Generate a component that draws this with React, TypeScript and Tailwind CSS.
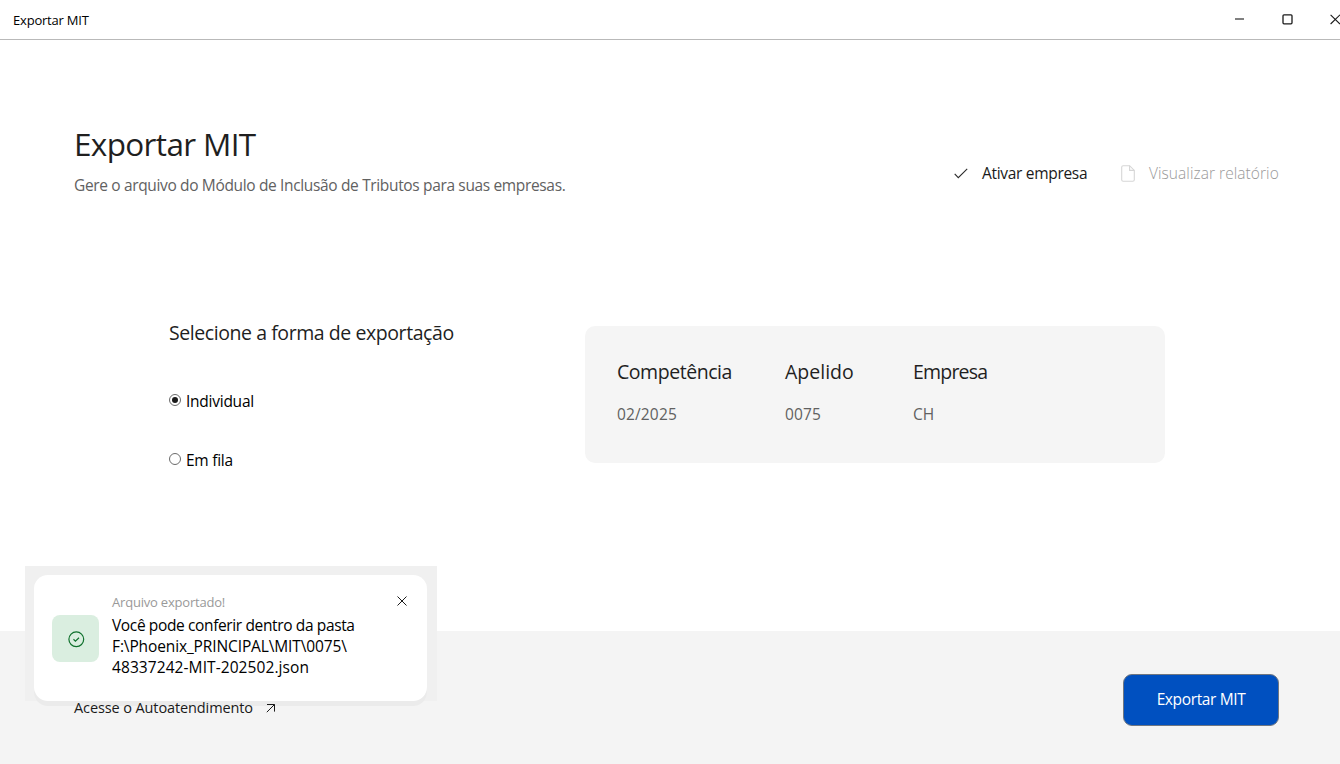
import React, { useState } from 'react';
import { clsx } from 'clsx';

type ExportMode = 'individual' | 'fila';

const company = [
  { label: 'Competência', value: '02/2025', width: 'w-[168px]', labelTracking: 'tracking-[-0.45px]', valueTracking: 'tracking-[0.15px]' },
  { label: 'Apelido', value: '0075', width: 'w-[128px]', labelTracking: 'tracking-normal', valueTracking: 'tracking-[0.1px]' },
  { label: 'Empresa', value: 'CH', width: 'w-[128px]', labelTracking: 'tracking-[-0.8px]', valueTracking: 'tracking-normal' },
];

const toastLines = [
  { text: 'Você pode conferir dentro da pasta', tracking: 'tracking-[-0.37px]' },
  { text: 'F:\\Phoenix_PRINCIPAL\\MIT\\0075\\', tracking: 'tracking-[-0.12px]' },
  { text: '48337242-MIT-202502.json', tracking: 'tracking-[0.08px]' },
];

const TitleBar: React.FC = () => (
  <header className="flex h-10 shrink-0 items-center justify-between border-b border-[#b9b9b9] pl-[13px]">
    <span className="text-[13px] leading-5 tracking-[-0.2px] text-black">Exportar MIT</span>
    <div className="flex shrink-0 items-center gap-[37px] text-[#1a1a1a] -mr-[1px]">
      <button aria-label="Minimizar">
        <svg width="11" height="11" viewBox="0 0 11 11" fill="none" stroke="#606060" strokeWidth="1.6">
          <path d="M1 5H10" />
        </svg>
      </button>
      <button aria-label="Maximizar">
        <svg width="11" height="11" viewBox="0 0 11 11" fill="none" stroke="currentColor" strokeWidth="1.3">
          <rect x="1" y="0.8" width="9" height="9" rx="1" />
        </svg>
      </button>
      <button aria-label="Fechar" className="w-[11px]">
        <svg width="11" height="11" viewBox="0 0 11 11" fill="none" stroke="currentColor" strokeWidth="1.1">
          <path d="M0.6 0.8L10 10M10 0.8L0.6 10" />
        </svg>
      </button>
    </div>
  </header>
);

interface RadioProps {
  label: string;
  checked: boolean;
  onChange: () => void;
}

const Radio: React.FC<RadioProps> = ({ label, checked, onChange }) => (
  <label className="flex items-center gap-[5px]">
    <input type="radio" name="mode" className="sr-only" checked={checked} onChange={onChange} />
    <span className="-mt-[3px] flex h-3 w-3 items-center justify-center rounded-full border border-[#6b6b6b] bg-white">
      {checked && <span className="h-1.5 w-1.5 rounded-full bg-[#1a1a1a]" />}
    </span>
    <span className="text-[15.5px] leading-5 tracking-[-0.25px] text-black">{label}</span>
  </label>
);

const Toast: React.FC<{ onClose: () => void }> = ({ onClose }) => (
  <div className="absolute left-[25px] top-[566px] h-[135px] w-[412px] bg-[#f0f0f0] px-[9px] pt-[9px]">
    <div className="flex h-[126px] w-[393px] rounded-[14px] bg-white pl-[18px] pt-[17px] shadow-[0_5px_0_0_#ebebeb]">
      <div className="mt-[23px] flex h-[47px] w-[47px] shrink-0 items-center justify-center rounded-lg bg-[#daeee0]">
        <svg width="18" height="18" viewBox="0 0 18 18" fill="none" stroke="#0e702c" strokeWidth="1.2">
          <circle cx="9.3" cy="9.3" r="7.4" />
          <path d="M6.5 9.3L8.4 11.1L12 7.8" />
        </svg>
      </div>
      <div className="-mt-px ml-[13px] w-[270px] whitespace-nowrap">
        <p className="mb-[2px] text-[13px] leading-[22px] tracking-[-0.2px] text-[#999]">Arquivo exportado!</p>
        {toastLines.map(line => (
          <p key={line.text} className={clsx('text-[15.5px] leading-[21px] text-black', line.tracking)}>{line.text}</p>
        ))}
      </div>
      <button aria-label="Fechar aviso" onClick={onClose} className="ml-[15px] mt-[4px] h-[11px] w-[11px]">
        <svg width="11" height="11" viewBox="0 0 11 11" fill="none" stroke="#1a1a1a" strokeWidth="1">
          <path d="M0.5 0.5L9.5 9.5M9.5 0.5L0.5 9.5" />
        </svg>
      </button>
    </div>
  </div>
);

export default function App() {
  const [mode, setMode] = useState<ExportMode>('individual');
  const [toastOpen, setToastOpen] = useState(true);

  return (
    <div className="relative flex h-[764px] w-[1340px] flex-col overflow-hidden bg-white font-['Open_Sans','Noto_Sans',sans-serif]">
      <TitleBar />

      <main className="flex flex-1 flex-col whitespace-nowrap">
        <section className="flex justify-between pl-[74px] pr-[61px] pt-[83px]">
          <div>
            <h1 className="text-[31.5px] leading-[42px] tracking-[-0.65px] text-[#1f1f1f]">Exportar MIT</h1>
            <p className="mt-[10px] text-[15.5px] leading-5 tracking-[-0.35px] text-[#616161]">
              Gere o arquivo do Módulo de Inclusão de Tributos para suas empresas.
            </p>
          </div>
          <div className="mt-[40px] flex h-5 items-center">
            <button className="flex items-center">
              <svg width="14" height="11" viewBox="0 0 14 11" fill="none" stroke="#2b2b2b" strokeWidth="1.1">
                <path d="M0.7 5.8L4.3 9.6L13.2 0.9" />
              </svg>
              <span className="ml-[14px] w-[105px] text-left text-[15.5px] leading-5 tracking-[-0.31px] text-[#1a1a1a]">Ativar empresa</span>
            </button>
            <button className="ml-[34px] flex items-center" disabled>
              <svg width="14" height="17" viewBox="0 0 14 17" fill="none" stroke="#d6d6d6" strokeWidth="1.1">
                <path d="M2.2 0.7H8.6L13.3 5.4V14.8Q13.3 16.3 11.8 16.3H2.2Q0.7 16.3 0.7 14.8V2.2Q0.7 0.7 2.2 0.7Z" />
                <path d="M8.6 0.7V5.4H13.3" />
              </svg>
              <span className="ml-[14px] w-[130px] text-left text-[15.5px] font-light leading-5 tracking-[0.06px] text-[#999]">Visualizar relatório</span>
            </button>
          </div>
        </section>

        <section className="mt-[124px] flex pl-[169px]">
          <div className="w-[416px]">
            <h2 className="text-[19.5px] leading-[28px] tracking-[-0.43px] text-[#1f1f1f]">Selecione a forma de exportação</h2>
            <div className="mt-[44px] flex flex-col gap-[39px]">
              <Radio label="Individual" checked={mode === 'individual'} onChange={() => setMode('individual')} />
              <Radio label="Em fila" checked={mode === 'fila'} onChange={() => setMode('fila')} />
            </div>
          </div>

          <div className="mt-[7px] flex h-[137px] w-[580px] rounded-[10px] bg-[#f5f5f5] pl-8 pt-8">
            {company.map(item => (
              <dl key={item.label} className={item.width}>
                <dt className={clsx('text-[19.5px] leading-[28px] text-[#1f1f1f]', item.labelTracking)}>{item.label}</dt>
                <dd className={clsx('mt-[18px] text-[15.5px] leading-5 text-[#616161]', item.valueTracking)}>{item.value}</dd>
              </dl>
            ))}
          </div>
        </section>
      </main>

      <footer className="flex h-[133px] shrink-0 items-start justify-between bg-[#f4f4f4] pl-[74px] pr-[61px] pt-[43px]">
        <a className="relative z-10 mt-[24px] flex items-center whitespace-nowrap">
          <span className="w-[179px] text-[14.5px] leading-5 tracking-[-0.11px] text-[#1a1a1a]">Acesse o Autoatendimento</span>
          <svg className="ml-[13px]" width="10" height="10" viewBox="0 0 10 10" fill="none" stroke="#1a1a1a" strokeWidth="1">
            <path d="M1 1.5H8.5V8.6M8.5 1.5L0.8 9.2" />
          </svg>
        </a>
        <button className="h-[52px] w-[156px] rounded-[9px] border border-[#6f7680] bg-[#0050c0] pb-[2px] text-[15.5px] leading-5 tracking-[-0.37px] text-white">
          Exportar MIT
        </button>
      </footer>

      {toastOpen && <Toast onClose={() => setToastOpen(false)} />}
    </div>
  );
}
